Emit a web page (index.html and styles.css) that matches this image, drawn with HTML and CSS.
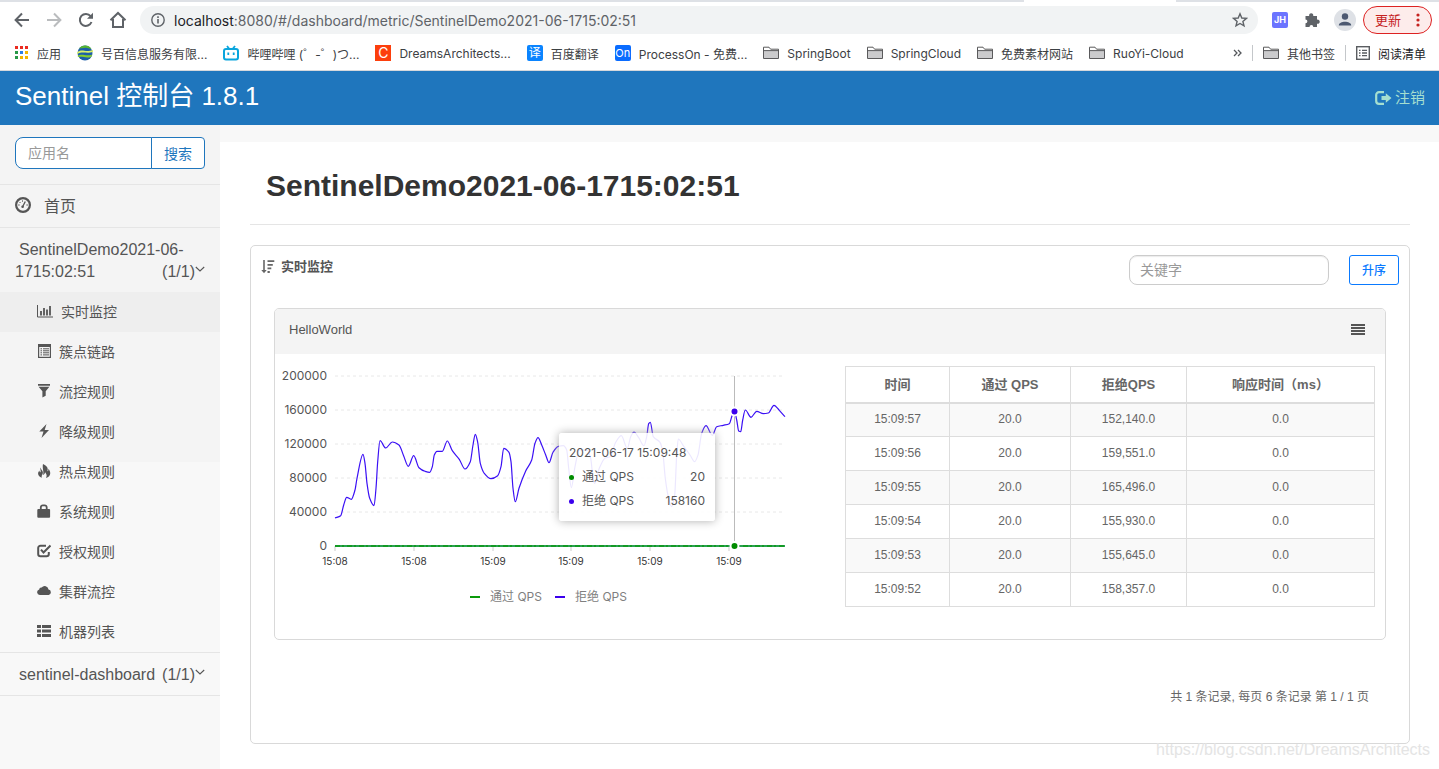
FILE: index.html
```html
<!DOCTYPE html>
<html lang="zh-CN">
<head>
<meta charset="utf-8">
<title>Sentinel 控制台</title>
<link rel="stylesheet" href="styles.css">
</head>
<body>
<svg class="defs" aria-hidden="true">
  <symbol id="folder" viewBox="0 0 16 14"><path d="M.5 12.5V1.2H6l1.600 2h7.900v9.300z" fill="#fff" stroke="#5a5a5c"/><path d="M1 5h14v7H1z" fill="#cbcbcd"/><path d="M.5 4.600h15" stroke="#5a5a5c"/></symbol>
  <symbol id="chevron" viewBox="0 0 10 10"><path d="M.8 2l4.200 4 4.200-4" fill="none" stroke="#555" stroke-width="1.100"/></symbol>
</svg>

<div class="browser">
  <div class="tabstrip"><i></i></div>
  <div class="toolbar">
    <button class="nav" aria-label="后退"><svg width="16" height="16" viewBox="0 0 16 16"><path d="M15 8H2M8 1.500L1.600 8 8 14.500" fill="none" stroke="#5f6368" stroke-width="2"/></svg></button>
    <button class="nav" aria-label="前进"><svg width="16" height="16" viewBox="0 0 16 16"><path d="M1 8h13M8 1.500L14.400 8 8 14.500" fill="none" stroke="#babcbe" stroke-width="2"/></svg></button>
    <button class="nav" aria-label="刷新"><svg width="16" height="16" viewBox="0 0 16 16"><path d="M13.500 10A6 6 0 1 1 12.600 4.200" fill="none" stroke="#5f6368" stroke-width="2"/><path d="M15 .8v6H9z" fill="#5f6368"/></svg></button>
    <button class="nav" aria-label="主页"><svg width="18" height="18" viewBox="0 0 18 18"><path d="M1.500 9.300L9 2l7.500 7.300M4 8v8h10V8" fill="none" stroke="#5f6368" stroke-width="2"/></svg></button>
    <div class="omnibox">
      <svg width="14" height="14" viewBox="0 0 14 14"><circle cx="7" cy="7" r="6.200" fill="none" stroke="#5f6368" stroke-width="1.400"/><path d="M7 6v4.500M7 3.300v1.600" stroke="#5f6368" stroke-width="1.600"/></svg>
      <span class="url"><b>localhost</b>:8080/#/dashboard/metric/SentinelDemo2021-06-1715:02:51</span>
      <svg class="star" width="16" height="16" viewBox="0 0 16 16"><path d="M8 1.800l1.800 4.200 4.600.4-3.500 3 1.100 4.500L8 11.500l-4 2.400 1.100-4.500-3.500-3 4.600-.4z" fill="none" stroke="#5f6368" stroke-width="1.400"/></svg>
    </div>
    <span class="ext">JH</span>
    <svg class="puzzle" width="16" height="16" viewBox="0 0 16 16"><path d="M1.500 4h3.700a2.100 2.100 0 1 1 4 0H13v3.700a2.100 2.100 0 1 1 0 4V15H9.300a1.900 1.900 0 0 0-3.800 0h-4v-3.800a1.900 1.900 0 0 0 0-3.800z" fill="#5f6368"/></svg>
    <svg class="avatar" width="22" height="22" viewBox="0 0 22 22"><circle cx="11" cy="11" r="11" fill="#dee1e6"/><circle cx="11" cy="7.500" r="3.200" fill="#4b5871"/><path d="M4.800 16.500c0-5 12.400-5 12.400 0z" fill="#4b5871"/></svg>
    <button class="update">更新<svg width="4" height="14" viewBox="0 0 4 14" fill="#c5221f"><circle cx="2" cy="2" r="1.600"/><circle cx="2" cy="7" r="1.600"/><circle cx="2" cy="12" r="1.600"/></svg></button>
  </div>
  <nav class="bookmarks">
    <a href="#"><svg width="14" height="14" viewBox="0 0 14 14"><path d="M0 0h3v3H0zM5 0h3v3H5zM10 0h3v3h-3z" fill="#ea2b20"/><path d="M0 5h3v3H0zM0 10h3v3H0z" fill="#279847"/><path d="M5 5h3v3H5z" fill="#2b7de9"/><path d="M10 5h3v3h-3zM5 10h3v3H5zM10 10h3v3h-3z" fill="#f4b400"/></svg>应用</a>
    <a href="#"><svg width="16" height="16" viewBox="0 0 16 16"><circle cx="8" cy="8" r="7.500" fill="#1d5fa8"/><path d="M2 3.500C5-.5 12-.5 14.500 4L9 2.800z" fill="#58b531"/><path d="M0 7.500C5 3 8 8 16 5v2C9 9 6 6 0 9z" fill="#d9ef6a"/><path d="M.5 11c5-3 8 1 15-1.500L14 12c-6 1.500-8-1-12.500 0z" fill="#86cd2e"/></svg>号百信息服务有限...</a>
    <a href="#"><svg width="16" height="16" viewBox="0 0 16 16"><path d="M4 1l2 2.500M12 1l-2 2.500" stroke="#0aa5dd" stroke-width="1.800"/><rect x="1" y="4" width="14" height="10.500" rx="2" fill="#fff" stroke="#0aa5dd" stroke-width="2"/><path d="M5.300 7.500v2.400M10.700 7.500v2.400" stroke="#0aa5dd" stroke-width="1.800"/></svg>哔哩哔哩 (゜-゜)つ...</a>
    <a href="#"><span class="fav fav-c">C</span>DreamsArchitects...</a>
    <a href="#"><span class="fav fav-yi">译</span>百度翻译</a>
    <a href="#"><span class="fav fav-on">On</span>ProcessOn - 免费...</a>
    <a href="#"><svg width="16" height="14"><use href="#folder"/></svg>SpringBoot</a>
    <a href="#"><svg width="16" height="14"><use href="#folder"/></svg>SpringCloud</a>
    <a href="#"><svg width="16" height="14"><use href="#folder"/></svg>免费素材网站</a>
    <a href="#"><svg width="16" height="14"><use href="#folder"/></svg>RuoYi-Cloud</a>
    <div class="bm-end">
      <svg width="9" height="8" viewBox="0 0 9 8"><path d="M1 1l3 3-3 3M5 1l3 3-3 3" fill="none" stroke="#55585c" stroke-width="1.300"/></svg>
      <a class="split" href="#"><svg width="16" height="14"><use href="#folder"/></svg>其他书签</a>
      <a class="split reading" href="#"><svg width="14" height="14" viewBox="0 0 14 14"><rect x=".7" y=".7" width="12.600" height="12.600" fill="none" stroke="#5a5d61" stroke-width="1.400"/><path d="M3 4.300h1.500M3 7h1.500M3 9.700h1.500M6 4.300h5M6 7h5M6 9.700h5" stroke="#5a5d61" stroke-width="1.300"/></svg>阅读清单</a>
    </div>
  </nav>
</div>

<header class="topbar">
  <a class="brand" href="#">Sentinel 控制台 1.8.1</a>
  <a class="logout" href="#"><svg width="17" height="14" viewBox="0 0 17 14"><path d="M9 1.200H4A2.800 2.800 0 0 0 1.200 4v6A2.800 2.800 0 0 0 4 12.800h5" fill="none" stroke="#a5dfd0" stroke-width="2.200"/><path d="M6.500 5h4.300V2.300L16.500 7l-5.700 4.700V9H6.500z" fill="#a5dfd0"/></svg>注销</a>
</header>

<div class="layout">
  <aside class="sidebar">
    <form class="search">
      <input type="text" placeholder="应用名" aria-label="应用名"><button type="button">搜索</button>
    </form>
    <a class="home" href="#"><svg width="16" height="16" viewBox="0 0 16 16"><circle cx="8" cy="8" r="6.900" fill="none" stroke="#555" stroke-width="2.200"/><path d="M7.500 10L10.300 4.500" stroke="#555" stroke-width="1.300"/><circle cx="7.600" cy="9.800" r="1.300" fill="#555"/><path d="M3.200 8h1.500M4.500 5l1 1M7.500 3.400v1.300M11.400 8h1.500" stroke="#555"/></svg>首页</a>
    <a class="app" href="#">SentinelDemo2021-06-1715:02:51<span class="count">(1/1)<svg width="10" height="10"><use href="#chevron"/></svg></span></a>
    <nav class="menu">
      <a class="active" href="#"><svg width="16" height="14" viewBox="0 0 16 14"><path d="M.5 1v12H16" fill="none" stroke="#555"/><path d="M4 11.500V7M7 11.500V4M10 11.500V5.500M13 11.500V2" stroke="#555" stroke-width="1.800"/></svg>实时监控</a>
      <a href="#"><svg width="14" height="14" viewBox="0 0 14 14"><rect x="1.600" y=".6" width="11.800" height="12.800" fill="none" stroke="#555" stroke-width="1.200"/><path d="M1 2h13" stroke="#555" stroke-width="2"/><path d="M3.500 4.800H5M3.500 6.800H5M3.500 8.800H5M3.500 10.900H5M6 4.800h6M6 6.800h6M6 8.800h6M6 10.900h6" stroke="#555"/></svg>簇点链路</a>
      <a href="#"><svg width="14" height="14" viewBox="0 0 14 14" fill="#555"><path d="M1 0h12v1.800H1zM1.600 2.700h10.800L8.700 7.200v4.600l-3.300 1.700V7.200z"/></svg>流控规则</a>
      <a href="#"><svg width="14" height="14" viewBox="0 0 14 14" fill="#555"><path d="M9.500 0L2.300 7.600h4.200L4.500 14 12 5.900H7.700z"/></svg>降级规则</a>
      <a href="#"><svg width="14" height="14" viewBox="0 0 14 14" fill="#555"><path d="M6 0c4.500 2 5.400 4.600 4.300 7.200 1 0 1.300-1 1-2.400 3.400 3.600 2.200 8-2.400 9.200 1.300-2.300.8-3.800-.9-5.700-.1 1.500-.8 2.400-2 2.600C7.200 7.600 5 4.400 6 0zM3.400 3.600c-.6 2 .9 3.100 0 4.700-.8-.2-.9-1-.8-1.800-2.600 2.300-1.900 6 2.300 7.300-.9-2.200 1-3 1-5.200C6 6.500 3.700 5.600 3.400 3.600z"/></svg>热点规则</a>
      <a href="#"><svg width="14" height="14" viewBox="0 0 14 14"><path d="M3.800 6V3.400a2 2 0 0 1 2-2h1.900a2 2 0 0 1 2 2V6" fill="none" stroke="#555" stroke-width="1.800"/><rect x=".3" y="5" width="12.800" height="8.800" rx="1" fill="#555"/></svg>系统规则</a>
      <a href="#"><svg width="14" height="14" viewBox="0 0 14 14" fill="none" stroke="#555" stroke-width="2"><path d="M9 1.700H3.500A2.300 2.300 0 0 0 1.200 4v6a2.300 2.300 0 0 0 2.300 2.300h6A2.300 2.300 0 0 0 11.800 10V8"/><path d="M4 5.700l2.500 2.800 7-7"/></svg>授权规则</a>
      <a href="#"><svg width="14" height="14" viewBox="0 0 14 14" fill="#555"><path d="M2.800 11a2.800 2.800 0 0 1-.6-5.500 2.200 2.200 0 0 1 2.500-2 3.800 3.800 0 0 1 6.800 2A2.800 2.800 0 0 1 11.700 11z"/></svg>集群流控</a>
      <a href="#"><svg width="14" height="14" viewBox="0 0 14 14" fill="#555"><path d="M0 1h4v3H0zM5 1h9v3H5zM0 5.500h4v3H0zM5 5.500h9v3H5zM0 10h4v3H0zM5 10h9v3H5z"/></svg>机器列表</a>
    </nav>
    <a class="app" href="#">sentinel-dashboard<span class="count">(1/1)<svg width="10" height="10"><use href="#chevron"/></svg></span></a>
  </aside>

  <main class="main">
    <h1>SentinelDemo2021-06-1715:02:51</h1>
    <section class="card">
      <div class="card-head">
        <h2><svg width="14" height="14" viewBox="0 0 14 14" fill="none" stroke="#666"><path d="M3 0v12" stroke-width="1.600"/><path d="M.3 10L3 13.300 5.700 10z" fill="#666" stroke="none"/><path d="M6.500 1.200h6.800M6.500 4.800h5.300M6.500 8.400h3.800M6.500 12h2.300" stroke-width="1.800"/></svg>实时监控</h2>
        <input type="text" placeholder="关键字" aria-label="关键字">
        <button type="button">升序</button>
      </div>
      <article class="metric">
        <header class="metric-head">HelloWorld<svg width="14" height="14" viewBox="0 0 14 14"><path d="M0 3h14M0 6h14M0 9h14M0 12h14" stroke="#555" stroke-width="1.900"/></svg></header>
        <div class="metric-body">
          <div class="chart">
            <svg id="chart" width="510" height="250" viewBox="0 0 510 250">
              <g class="grid"><path d="M50 10H500M50 44H500M50 78H500M50 112H500M50 146H500"/></g>
              <path class="ticks" d="M50 180v5M129 180v5M208 180v5M286 180v5M365 180v5M444 180v5"/>
              <g class="y-labels"><text x="42" y="14">200000</text><text x="42" y="48">160000</text><text x="42" y="82">120000</text><text x="42" y="116">80000</text><text x="42" y="150">40000</text><text x="42" y="184">0</text></g>
              <g class="x-labels"><text x="50" y="199">15:08</text><text x="129" y="199">15:08</text><text x="208" y="199">15:09</text><text x="286" y="199">15:09</text><text x="365" y="199">15:09</text><text x="444" y="199">15:09</text></g>
              <path d="M449.500 10v170" stroke="#bbb"/>
              <path d="M50 180H500" stroke="#2aa052" stroke-width="2"/><path d="M50 180H500" stroke="#139a24" stroke-width="2" stroke-dasharray="5 2 2 3"/>
              <path id="blocked" class="line"/>
              <g stroke="#fff" stroke-width="2"><circle cx="449.500" cy="45.500" r="4" fill="#3b00ed"/><circle cx="449.500" cy="180" r="4" fill="#008c00"/></g>
              <path d="M185 231h10" stroke="#0a9a0a" stroke-width="2"/><path d="M270 231h10" stroke="#3b00ed" stroke-width="2"/>
              <g class="legend"><text x="205" y="235">通过 QPS</text><text x="290" y="235">拒绝 QPS</text></g>
            </svg>
            <div class="tooltip">
              <p>2021-06-17 15:09:48</p>
              <p><i class="pass"></i>通过 QPS<span>20</span></p>
              <p><i class="block"></i>拒绝 QPS<span>158160</span></p>
            </div>
          </div>
          <table class="data">
            <colgroup><col class="c-time"><col class="c-pass"><col class="c-block"><col></colgroup>
            <thead><tr><th>时间</th><th>通过 QPS</th><th>拒绝QPS</th><th>响应时间（ms）</th></tr></thead>
            <tbody>
              <tr><td>15:09:57</td><td>20.0</td><td>152,140.0</td><td>0.0</td></tr>
              <tr><td>15:09:56</td><td>20.0</td><td>159,551.0</td><td>0.0</td></tr>
              <tr><td>15:09:55</td><td>20.0</td><td>165,496.0</td><td>0.0</td></tr>
              <tr><td>15:09:54</td><td>20.0</td><td>155,930.0</td><td>0.0</td></tr>
              <tr><td>15:09:53</td><td>20.0</td><td>155,645.0</td><td>0.0</td></tr>
              <tr><td>15:09:52</td><td>20.0</td><td>158,357.0</td><td>0.0</td></tr>
            </tbody>
          </table>
        </div>
      </article>
      <p class="pager">共 1 条记录, 每页 6 条记录 第 1 / 1 页</p>
    </section>
  </main>
</div>
<div class="watermark">https://blog.csdn.net/DreamsArchitects</div>
<script src="chart.js"></script>
</body>
</html>
```

FILE: styles.css
```css
* { box-sizing: border-box; }
body {
  margin: 0;
  min-height: 100vh;
  display: flex;
  flex-direction: column;
  background: #f8f8f8;
  color: #555;
  font-family: "Liberation Sans", "Noto Sans CJK SC", sans-serif;
  font-size: 14px;
}
a { color: inherit; text-decoration: none; }
h1, h2, p { margin: 0; }
button, input { font-family: inherit; }
svg { flex: none; }
.defs { position: absolute; width: 0; height: 0; }

/* browser window */
.browser { background: #fff; border-bottom: 1px solid #d5d8dc; font-family: Inter, "Noto Sans CJK SC", sans-serif; }
.tabstrip { height: 2px; background: #dee1e6; display: flex; justify-content: flex-end; }
.tabstrip i { width: 152px; margin-right: 263px; background: #fff; }
.toolbar { height: 36px; display: flex; align-items: center; padding: 0 7px 0 14px; }
.nav { border: 0; background: none; padding: 0; width: 16px; height: 20px; margin-right: 16px; display: flex; align-items: center; justify-content: center; }
.nav:nth-child(4) { margin-right: 14px; }
.omnibox { flex: 1; height: 28px; border-radius: 14px; background: #f1f3f4; display: flex; align-items: center; padding: 0 10px 0 11px; gap: 9px; }
.url { flex: 1; font-size: 14px; color: #5f6368; }
.url b { font-weight: 400; color: #202124; }
.ext { width: 16px; height: 16px; margin-left: 14px; border-radius: 2px; background: #6b74ff; color: #fff; font-size: 9px; font-weight: 700; line-height: 16px; text-align: center; }
.puzzle { margin: 0 14px 0 16px; }
.update { height: 28px; margin-left: 7px; padding: 0 11px 1px; border: 1px solid #d22; border-radius: 14px; background: #fdeceb; color: #c5221f; font-size: 13px; display: flex; align-items: center; gap: 15px; }
.bookmarks { height: 32px; display: flex; align-items: center; gap: 16px; padding: 0 13px 2px 15px; font-size: 12px; color: #3c4043; white-space: nowrap; }
.bookmarks a { display: flex; align-items: center; gap: 8px; }
.fav { width: 16px; height: 16px; border-radius: 2px; color: #fff; line-height: 16px; text-align: center; overflow: hidden; }
.fav-c { background: #fc3f0c; font-size: 14px; border-radius: 0; }
.fav-yi { background: #0a84ff; }
.fav-on { background: #0a6cff; font-size: 11px; }
.bm-end { margin-left: auto; display: flex; align-items: center; gap: 10px; }
.bm-end .split { border-left: 1px solid #c4c7ca; padding-left: 10px; height: 16px; }
.bm-end .reading { color: #202124; }

/* application header */
.topbar { height: 54px; padding: 0 14px 0 15px; background: #1f76bd; display: flex; justify-content: space-between; color: #fff; }
.brand { font-size: 26px; line-height: 50px; }
.logout { color: #a5dfd0; font-size: 15px; line-height: 54px; display: flex; align-items: center; gap: 3px; }

.layout { flex: 1; display: flex; }
.sidebar { width: 220px; flex: none; background: linear-gradient(#f4f4f4 337px, #f8f8f8 337px); }
.search { display: flex; padding: 12px 15px 15px; }
.search input { flex: 1; min-width: 0; height: 32px; padding: 0 12px; border: 1px solid #1f76bd; border-radius: 8px 0 0 8px; background: #fff; font-size: 14px; }
.search button { width: 54px; height: 32px; margin-left: -1px; padding: 0; border: 1px solid #1f76bd; border-radius: 0 4px 4px 0; background: #fff; color: #1f76bd; font-size: 14px; }
::placeholder { color: #999; }
.home { height: 43px; padding: 0 15px 2px; border-top: 1px solid #e5e5e5; display: flex; align-items: center; gap: 13px; font-size: 16px; }
.app { display: block; border-top: 1px solid #e5e5e5; padding: 11px 15px 9px; font-size: 16px; line-height: 22px; text-indent: 4px; }
.sidebar > .app:last-child { border-bottom: 1px solid #e5e5e5; }
.count { float: right; display: flex; align-items: center; text-indent: 0; }
.count svg { margin-bottom: 4px; }
.menu a { height: 40px; padding: 0 0 2px 37px; display: flex; align-items: center; gap: 8px; font-size: 14px; }
.menu .active { background: #eee; }

/* content */
.main { flex: 1; min-width: 0; margin-top: 17px; padding: 0 29px 25px 30px; background: #fff; }
h1 { padding: 22px 16px; height: 83px; border-bottom: 1px solid #e5e5e5; font-size: 30px; line-height: 44px; color: #333; }
.card { margin-top: 20px; border: 1px solid #d9d9d9; border-radius: 5px; padding: 9px 23px 36px; }
.card-head { display: flex; align-items: center; height: 30px; margin: 0 -13px 23px; }
h2 { margin-right: auto; font-size: 13px; color: #555; display: flex; align-items: center; gap: 6px; line-height: 20px; padding-bottom: 6px; }
.card-head input { width: 200px; height: 30px; padding: 0 10px; border: 1px solid #ccc; border-radius: 8px; font-size: 14px; box-shadow: inset 0 1px 1px rgba(0, 0, 0, .08); }
.card-head button { width: 50px; height: 30px; margin-left: 20px; padding: 0 0 2px; border: 1px solid #0a7aff; border-radius: 3px; background: #fff; color: #0a7aff; font-size: 12px; font-weight: 500; }
.metric { border: 1px solid #d9d9d9; border-radius: 5px; overflow: hidden; }
.metric-head { height: 45px; padding: 0 20px 5px 14px; background: #f4f4f4; display: flex; justify-content: space-between; align-items: center; font-size: 13px; }
.metric-body { display: grid; grid-template-columns: 560fr 530fr; padding: 12px 10px 23px; align-items: start; }
.chart { position: relative; height: 250px; font-family: Inter, "Noto Sans CJK SC", sans-serif; font-size: 12px; }
.chart > svg { display: block; overflow: visible; }
.grid path { stroke: #e8e8e8; stroke-dasharray: 3 3; }
.ticks { stroke: #ccc; }
.y-labels { fill: #555; text-anchor: end; }
.x-labels { fill: #333; text-anchor: middle; font-size: 10px; }
.legend { fill: #808080; }
.line { fill: none; stroke: #3b10f5; stroke-width: 1.2; }
.tooltip { position: absolute; left: 274px; top: 67px; width: 156px; height: 88px; padding: 8px 10px; border-radius: 3px; background: rgba(255, 255, 255, .9); box-shadow: 0 0 10px #aeaeae; }
.tooltip p { display: flex; align-items: center; line-height: 24px; }
.tooltip i { width: 5px; height: 5px; margin-right: 8px; border-radius: 50%; }
.tooltip span { margin-left: auto; }
.pass { background: #008c00; }
.block { background: #3b00ed; }
.data { width: 100%; border-collapse: collapse; table-layout: fixed; font-size: 12px; text-align: center; color: #666; }
.c-time { width: 104px; }
.c-pass { width: 121px; }
.c-block { width: 116px; }
.data th, .data td { border: 1px solid #ddd; height: 34px; padding: 0 0 2px; }
.data th { height: 36px; border-bottom-width: 2px; font-size: 13px; }
.data tbody tr:nth-child(odd) { background: #f9f9f9; }
.pager { margin-top: 47px; padding-right: 17px; text-align: right; font-size: 12px; line-height: 20px; color: #666; }
.watermark { position: absolute; right: 9px; bottom: 9px; font-size: 16px; line-height: 20px; color: #e4e4e4; }
```

FILE: chart.js
```js
// Rejected QPS samples as chart coordinates (x, y)
const points = [[50,152],[55.7,149.7],[58.7,139],[61.7,131.3],[66.3,133.3],[70,124],[72,112.3],[78,88.3],[80,97.3],[82,117.3],[84.7,132.3],[89,139.7],[91,122.3],[92.7,95.7],[95,74.7],[100.7,82],[107.3,76],[114,79],[118.7,90],[123.3,100.3],[128.7,89.7],[134,101.7],[140,105.3],[144.7,106.3],[147.3,100.7],[149.3,89],[152,85.3],[157.3,85.3],[162.3,75],[167.3,84.7],[174.3,93.3],[180,103],[185.3,95.7],[188,79],[190.3,68.3],[192.7,76.3],[195.3,97.3],[199.3,107.3],[206,112.7],[212.7,109.7],[216,100.7],[218.7,82.3],[224,86.3],[226,95.7],[228,122.3],[230.3,135.7],[234,122.3],[240.7,105],[246.7,94],[250,77.3],[253,71.7],[256.7,79],[260.7,89],[264,96.7],[268,86.3],[273.3,80.3],[278.3,79.7],[281.7,84],[283.7,102.3],[286.3,121.7],[290,100.7],[294.3,84],[302.3,84],[305.7,92.3],[308.3,114],[309.7,117.3],[314.3,102.3],[320,92.3],[325,90.7],[330.7,76.3],[336.3,69.7],[342.3,82.3],[345.7,70.7],[349,66],[353.7,71.7],[359,79.7],[361.7,70.7],[363.7,57.7],[365.3,56.3],[368.3,70.7],[375,76.3],[377.7,85.7],[380.3,112.3],[383.3,130.7],[386.7,140.7],[389.7,129],[391.7,89],[393.3,73],[398.3,79.7],[405,89],[409.7,95.7],[413,89],[416.7,67.3],[421,59.7],[427.3,69.3],[431.7,60.7],[438.3,59.3],[444.3,57.7],[447.3,49],[449.3,45.3],[451.7,54],[453.7,65],[455.7,65.7],[457.7,54],[460.3,44],[466,51.3],[471.7,45.3],[478.3,47.7],[483.3,47],[489,39.3],[494.3,44.3],[500,50.7]];

// Monotone cubic interpolation keeps peaks free of overshoot
function tangents(p) {
  const s = p.slice(1).map((q, i) => (q[1] - p[i][1]) / (q[0] - p[i][0]));
  return p.map((_, i) => {
    if (i === 0) return s[0];
    if (i === p.length - 1) return s[i - 1];
    return s[i - 1] * s[i] <= 0 ? 0 : 2 * s[i - 1] * s[i] / (s[i - 1] + s[i]);
  });
}

const t = tangents(points);
let d = `M${points[0]}`;
for (let i = 1; i < points.length; i++) {
  const [x0, y0] = points[i - 1];
  const [x1, y1] = points[i];
  const h = (x1 - x0) / 3;
  d += `C${x0 + h},${y0 + h * t[i - 1]} ${x1 - h},${y1 - h * t[i]} ${x1},${y1}`;
}
document.getElementById("blocked").setAttribute("d", d);
```
